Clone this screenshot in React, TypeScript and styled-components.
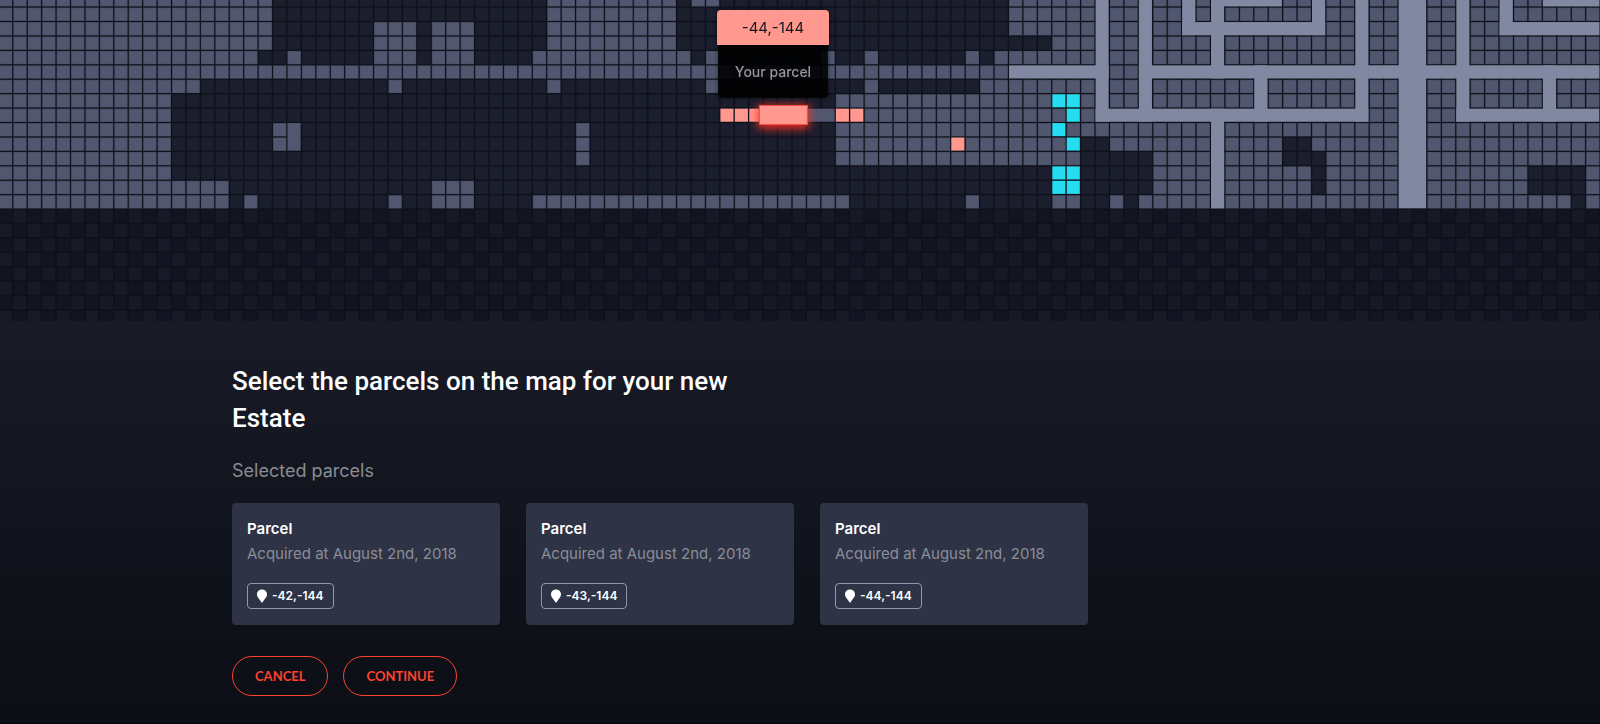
import React from "react";
import styled, { createGlobalStyle } from "styled-components";

const GlobalStyle = createGlobalStyle`
  * { box-sizing: border-box; }
  body {
    margin: 0;
    background: #0d0f17;
    color: #ffffff;
    font-family: Inter, "Liberation Sans", sans-serif;
  }
`;

/* ---------- map data: [firstRow, lastRow, firstCol, lastCol] ---------- */

type Area = [number, number, number, number];

const PITCH = 14.43;
const CELL = 13.1;
const ORIGIN_X = -1.1;
const ORIGIN_Y = -6.8;
const COLS = 111;
const LAND_ROWS = 15;
const ROWS = 23;

const land: Area[] = [
  [0, 3, 0, 18], [4, 4, 0, 17], [4, 4, 20, 20], [2, 4, 26, 28], [2, 4, 30, 32],
  [5, 5, 0, 69], [6, 6, 0, 13], [6, 6, 27, 27], [7, 12, 0, 11], [9, 10, 19, 19],
  [13, 14, 0, 15], [14, 14, 17, 17], [14, 14, 27, 27], [0, 3, 38, 46],
  [0, 0, 48, 49], [4, 4, 37, 47], [4, 4, 49, 49], [6, 6, 38, 38], [6, 6, 49, 49],
  [9, 11, 40, 40], [13, 14, 30, 32], [14, 14, 37, 58], [0, 2, 70, 75],
  [3, 3, 73, 75], [4, 4, 57, 57], [4, 4, 60, 60], [4, 4, 67, 67], [4, 4, 69, 75],
  [6, 6, 60, 60], [6, 6, 68, 75], [7, 9, 58, 75], [10, 11, 58, 74],
  [14, 14, 67, 67], [14, 14, 73, 74], [0, 7, 77, 78], [0, 4, 80, 83],
  [6, 7, 80, 93], [9, 10, 77, 96], [9, 9, 76, 76], [11, 14, 80, 96],
  [14, 14, 77, 77], [14, 14, 79, 79], [0, 4, 85, 93], [0, 14, 95, 96],
  [0, 14, 99, 100], [0, 7, 102, 110], [9, 14, 101, 110],
];

const empty: Area[] = [
  [10, 11, 89, 90], [11, 13, 91, 91], [12, 13, 106, 109], [14, 14, 109, 109],
];

const roads: Area[] = [
  [0, 8, 76, 76], [0, 8, 79, 79], [5, 5, 70, 76], [5, 5, 79, 110],
  [8, 8, 76, 94], [8, 8, 101, 110], [0, 2, 82, 82], [2, 2, 82, 91],
  [0, 5, 84, 84], [8, 14, 84, 84], [0, 0, 84, 88], [0, 2, 91, 91],
  [5, 8, 87, 87], [0, 8, 94, 94], [0, 14, 97, 98], [0, 8, 101, 101],
  [0, 2, 104, 104], [2, 2, 104, 110], [0, 0, 107, 110], [5, 8, 107, 107],
];

const joinedLand: Area[] = [[9, 10, 20, 20], [8, 8, 56, 57]];

const owned: Area[] = [[8, 8, 50, 52], [8, 8, 58, 59], [10, 10, 66, 66]];

const forSale: Area[] = [
  [7, 7, 73, 74], [8, 8, 74, 74], [9, 9, 73, 73], [10, 10, 74, 74],
  [12, 13, 73, 74],
];

const left = (col: number) => ORIGIN_X + col * PITCH;
const top = (row: number) => ORIGIN_Y + row * PITCH;
const inside = (areas: Area[], row: number, col: number) =>
  areas.some(([r0, r1, c0, c1]) => row >= r0 && row <= r1 && col >= c0 && col <= c1);

const cellColor = (row: number, col: number) => {
  if (row >= LAND_ROWS) return (row + col) % 2 ? "#131421" : "#181927";
  if (inside(owned, row, col)) return "#ff9990";
  if (inside(forSale, row, col)) return "#25dcf0";
  if (inside(empty, row, col)) return "#1b1e2d";
  return inside(land, row, col) ? "#50576f" : "#1b1e2d";
};

const rimColor: Record<string, string> = {
  "#50576f": "#464b61",
  "#1b1e2d": "#181b29",
};

const Merged = ({ areas, color }: { areas: Area[]; color: string }) => (
  <>
    {areas.map(([r0, r1, c0, c1]) => (
      <rect
        key={`${r0}-${r1}-${c0}-${c1}`}
        x={left(c0)}
        y={top(r0)}
        width={(c1 - c0) * PITCH + CELL}
        height={(r1 - r0) * PITCH + CELL}
        fill={color}
      />
    ))}
  </>
);

const Atlas = () => {
  const cells: React.ReactElement[] = [];
  for (let row = 0; row < ROWS; row++) {
    for (let col = 0; col < COLS; col++) {
      const fill = cellColor(row, col);
      const rim = rimColor[fill];
      if (rim) {
        cells.push(
          <rect key={`r${row}-${col}`} x={left(col)} y={top(row)} width={CELL + 0.2} height={CELL + 0.2} fill={rim} />
        );
      }
      const inset = rim ? 0.7 : 0;
      cells.push(
        <rect
          key={`${row}-${col}`}
          x={left(col) + inset}
          y={top(row) + inset}
          width={CELL - inset * 1.5}
          height={CELL - inset * 1.5}
          fill={fill}
        />
      );
    }
  }
  const picked = [53, 54, 55];
  return (
    <MapDrawing viewBox="0 0 1600 321" preserveAspectRatio="xMidYMid slice" role="img" aria-label="Parcel map">
      <defs>
        <filter id="glow" x="-30%" y="-100%" width="160%" height="300%">
          <feGaussianBlur stdDeviation="5" />
        </filter>
      </defs>
      <rect width="1600" height="321" fill="#0f101a" />
      {cells}
      <Merged areas={roads} color="#8188a2" />
      <Merged areas={joinedLand} color="#50576f" />
      <rect x="758" y="106" width="51" height="22" fill="#ff2d20" filter="url(#glow)" />
      <rect x="759" y="105" width="49" height="20" fill="#ff4c41" />
      {picked.map((col) => (
        <rect key={col} x={760 + (col - 53) * 14.4} y="106" width="18" height="18" fill="#ff9990" />
      ))}
    </MapDrawing>
  );
};

/* ---------- styled parts ---------- */

const Page = styled.div`
  min-height: 100vh;
  display: flex;
  flex-direction: column;
  background: #0d0f17;
`;

const MapArea = styled.section`
  position: relative;
  height: 321px;
  overflow: hidden;
`;

const MapDrawing = styled.svg`
  display: block;
  width: 100%;
  height: 100%;
`;

const Popup = styled.div`
  position: absolute;
  top: 10px;
  left: calc(50% - 83px);
  width: 112px;
  text-align: center;
  border-radius: 4px;
  filter: drop-shadow(0 0 2px rgba(0, 0, 0, 0.6));
`;

const PopupTitle = styled.div`
  height: 35px;
  line-height: 36px;
  font-size: 15px;
  color: #14151c;
  background: #ff9990;
  border-radius: 4px 4px 0 0;
`;

const PopupBody = styled.div`
  height: 53px;
  margin: 0 1px;
  line-height: 54px;
  font-size: 14px;
  font-weight: 500;
  color: #95969a;
  background: rgba(0, 0, 0, 0.8);
  border-radius: 0 0 4px 4px;
`;

const Panel = styled.main`
  flex: 1;
  padding: 42px 232px 27px;
  background: linear-gradient(#181a26, #0c0e15);
  border-bottom: 1px solid #07080d;
`;

const Content = styled.div`
  max-width: 1136px;
`;

const Title = styled.h1`
  max-width: 500px;
  margin: 0;
  font-family: Roboto, "Liberation Sans", sans-serif;
  font-size: 26px;
  line-height: 37px;
  font-weight: 500;
`;

const Subtitle = styled.h2`
  margin: 20px 0 18px;
  font-size: 18px;
  line-height: 28px;
  font-weight: 400;
  color: #8a8c92;
`;

const Cards = styled.ul`
  display: grid;
  grid-template-columns: repeat(auto-fill, 268px);
  gap: 26px;
  margin: 0;
  padding: 0;
  list-style: none;
`;

const Card = styled.li`
  height: 122px;
  padding: 13px 15px;
  border-radius: 4px;
  background: #2e3346;
`;

const CardTitle = styled.h3`
  margin: 0;
  font-size: 15px;
  line-height: 25px;
  font-weight: 600;
`;

const CardMeta = styled.p`
  margin: 0 0 17px;
  font-size: 15px;
  line-height: 25px;
  color: #8a8d96;
`;

const Coordinates = styled.span`
  display: inline-flex;
  align-items: center;
  gap: 5px;
  height: 26px;
  padding: 0 9px;
  border: 1px solid #9698a2;
  border-radius: 4px;
  font-size: 12px;
  font-weight: 600;
  line-height: 24px;
`;

const Pin = styled.svg`
  width: 10px;
  height: 14px;
  fill: #ffffff;
`;

const Actions = styled.div`
  display: flex;
  gap: 15px;
  margin-top: 31px;
`;

const ActionButton = styled.button`
  height: 40px;
  padding: 0 22px;
  border: 1px solid #ff4130;
  border-radius: 20px;
  background: transparent;
  color: #ff4130;
  font-family: Lato, "Liberation Sans", sans-serif;
  font-size: 13px;
  font-weight: 700;
  text-transform: uppercase;
`;

const parcels = ["-42,-144", "-43,-144", "-44,-144"];

export default function App() {
  return (
    <Page>
      <GlobalStyle />
      <MapArea>
        <Atlas />
        <Popup role="tooltip">
          <PopupTitle>-44,-144</PopupTitle>
          <PopupBody>Your parcel</PopupBody>
        </Popup>
      </MapArea>
      <Panel>
        <Content>
          <Title>Select the parcels on the map for your new Estate</Title>
          <Subtitle>Selected parcels</Subtitle>
          <Cards>
            {parcels.map((coords) => (
              <Card key={coords}>
                <CardTitle>Parcel</CardTitle>
                <CardMeta>Acquired at August 2nd, 2018</CardMeta>
                <Coordinates>
                  <Pin viewBox="0 0 10 14" aria-hidden="true">
                    <path d="M5 0.5C2.4 0.5 0 2.4 0 5.2C0 8.4 3 10.4 4.2 13C4.5 13.7 5.5 13.7 5.8 13C7 10.4 10 8.4 10 5.2C10 2.4 7.6 0.5 5 0.5Z" />
                  </Pin>
                  {coords}
                </Coordinates>
              </Card>
            ))}
          </Cards>
          <Actions>
            <ActionButton type="button">Cancel</ActionButton>
            <ActionButton type="button">Continue</ActionButton>
          </Actions>
        </Content>
      </Panel>
    </Page>
  );
}
